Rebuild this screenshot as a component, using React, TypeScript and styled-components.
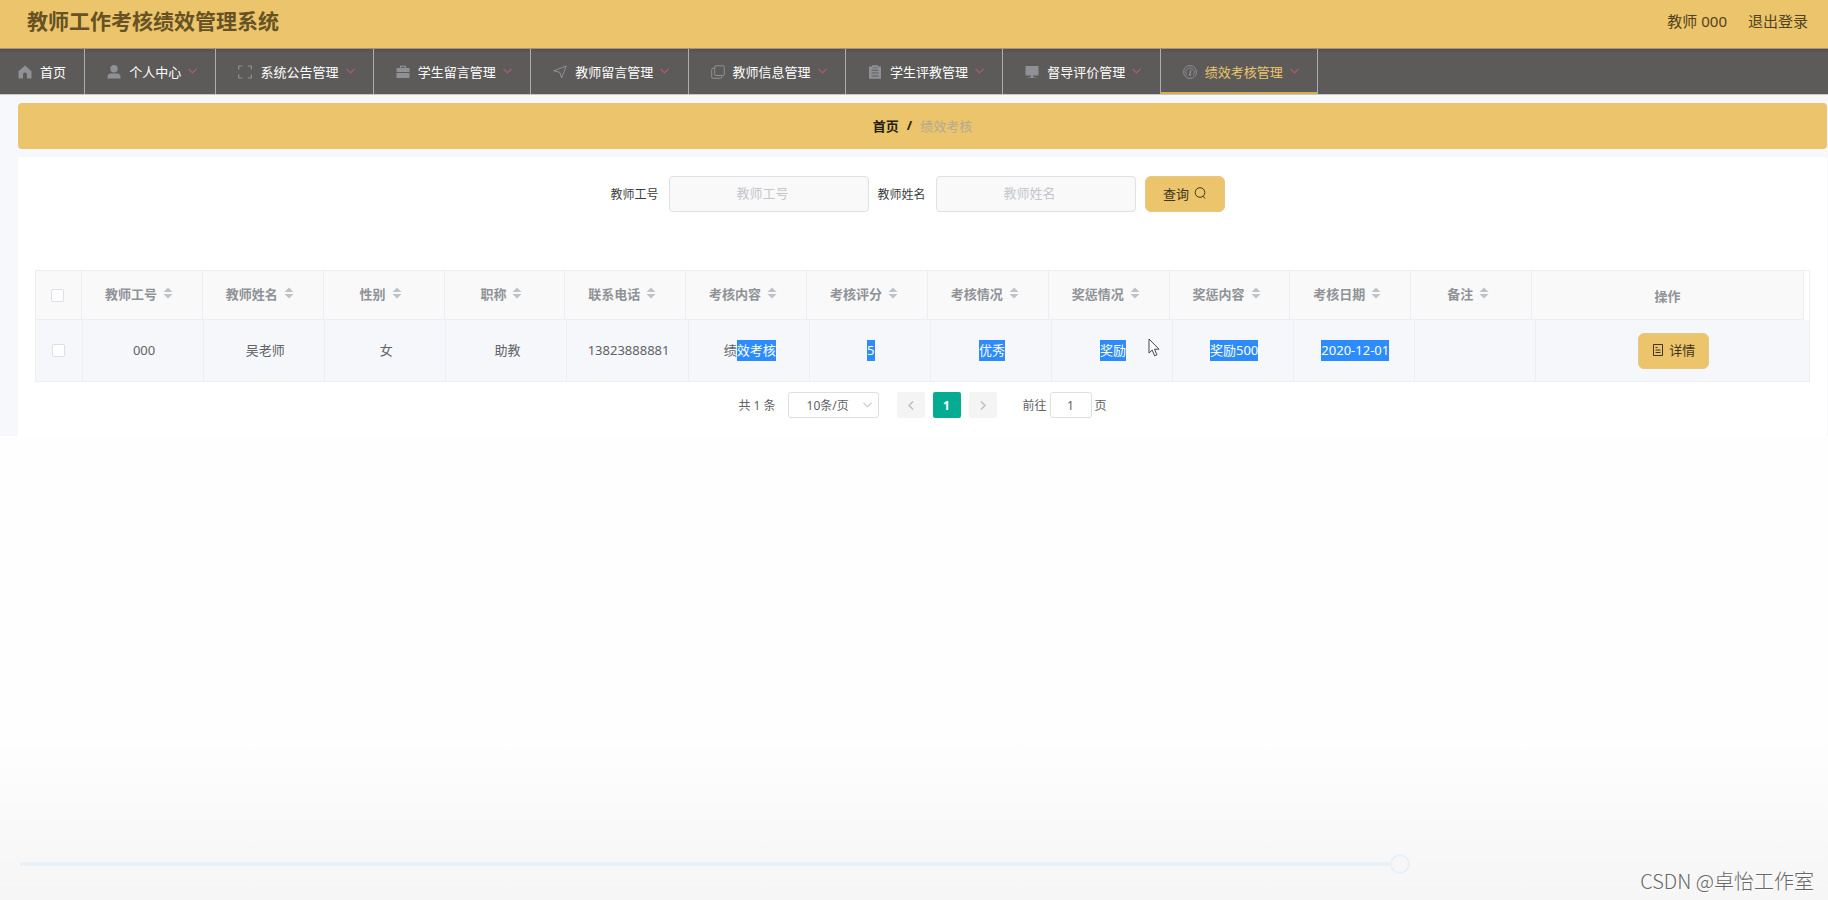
import React from 'react';
import styled, { createGlobalStyle, css } from 'styled-components';

const gold = '#ebc46b';
const line = '#ebeef5';

const GlobalStyle = createGlobalStyle`
  *, *::before, *::after { box-sizing: border-box; }
  body {
    margin: 0;
    background: #fefefe;
    font-family: "Noto Sans", "Noto Sans CJK SC", sans-serif;
    font-size: 13px;
    color: #606266;
  }
  button, input, select { font-family: inherit; font-size: inherit; color: inherit; }
  a { color: inherit; text-decoration: none; }
`;

const Page = styled.div`
  display: flex;
  flex-direction: column;
  min-height: 100vh;
`;

const Header = styled.header`
  display: flex;
  align-items: center;
  justify-content: space-between;
  height: 49px;
  padding: 0 20px 6px 27px;
  background: ${gold};
  border-bottom: 1px solid #a39676;
  color: #4f4220;
`;

const SystemTitle = styled.h1`
  margin: 0;
  font-size: 21px;
  line-height: 28px;
  font-weight: 700;
  color: #665224;
`;

const Account = styled.div`
  display: flex;
  gap: 21px;
  font-size: 15px;
  line-height: 20px;
`;

const Nav = styled.nav`
  background: linear-gradient(#525151, #5d5b59 4px);
  border-bottom: 1px solid #c9c8c8;
`;

const Menu = styled.ul`
  display: grid;
  grid-template-columns: 85fr 131fr repeat(7, 157fr);
  width: 72.1%;
  min-width: max-content;
  margin: 0;
  padding: 0;
  list-style: none;
`;

const MenuLink = styled.a<{ $active?: boolean; $first?: boolean }>`
  display: flex;
  align-items: center;
  height: 45px;
  padding: 0 16px 0 ${p => (p.$first ? 18 : 22)}px;
  border-right: 1px solid #aeadac;
  white-space: nowrap;
  color: ${p => (p.$active ? gold : '#fff')};
  ${p => p.$active && css`box-shadow: inset 0 -2px 0 #d9a94f;`}
`;

const MenuIcon = styled.svg`
  flex: none;
  width: 14px;
  height: 14px;
  margin-right: 8px;
  color: #8f9196;
`;

const MenuArrow = styled.svg`
  flex: none;
  width: 9px;
  height: 6px;
  margin: 0 0 2px 7px;
  color: #b65a80;
`;

const Main = styled.main`
  padding: 8px 1px 0 18px;
  background: #f7f8fb;
`;

const Breadcrumb = styled.nav`
  display: flex;
  align-items: center;
  justify-content: center;
  gap: 8px;
  height: 46px;
  margin-bottom: 8px;
  padding-bottom: 2px;
  border-radius: 4px;
  background: ${gold};
  color: #b3aa93;

  a, b { font-weight: 700; color: #241d0c; }
`;

const Panel = styled.section`
  padding: 19px 17px 18px;
  background: #fff;
`;

const SearchForm = styled.form`
  display: flex;
  align-items: center;
  justify-content: center;
  gap: 9px;
  margin-bottom: 58px;
  padding-right: 10px;
`;

const SearchLabel = styled.label`
  display: flex;
  align-items: center;
  gap: 10px;
  font-size: 12px;
  color: #3c3c3c;
`;

const SearchInput = styled.input`
  width: 200px;
  height: 36px;
  padding: 0 12px 2px 0;
  border: 1px solid #dfe0e3;
  border-radius: 4px;
  background: #f9f9f9;
  font-size: 13px;
  text-align: center;

  &::placeholder { color: #c3c6cc; }
`;

const GoldButton = styled.button<{ $width: number }>`
  display: inline-flex;
  align-items: center;
  justify-content: center;
  gap: 5px;
  width: ${p => p.$width}px;
  height: 36px;
  padding: 0 0 2px;
  border: 1px solid #e3c886;
  border-radius: 6px;
  background: ${gold};
  color: #3f351b;
`;

const ButtonIcon = styled.svg`
  width: 12px;
  height: 12px;
`;

const Table = styled.table`
  display: block;
  border: 1px solid ${line};
  border-bottom: 0;
`;

const HeadRow = styled.tr`
  display: grid;
  grid-template-columns: 46px repeat(12, 4fr) 9fr;
  height: 49px;
  margin-right: 5px;
  background: #f9f9f9;
`;

const BodyRow = styled.tr`
  display: grid;
  grid-template-columns: 47px repeat(12, 4fr) 9fr;
  height: 62px;
  background: #f5f7fa;
`;

const Section = styled.thead`
  display: block;
`;

const HeadCell = styled.th<{ $sortable?: boolean }>`
  display: flex;
  align-items: center;
  justify-content: center;
  padding: 0 0 ${p => (p.$sortable ? 4 : 0)}px;
  border-right: 1px solid ${line};
  border-bottom: 1px solid ${line};
  color: #8f9297;
  font-weight: 700;
`;

const BodyCell = styled.td`
  position: relative;
  display: flex;
  align-items: center;
  justify-content: center;
  padding: 0 0 0 2px;
  border-right: 1px solid ${line};
  border-bottom: 1px solid ${line};
  line-height: 21px;

  &:first-child { padding: 0; }
  &:last-child { border-right: 0; }
`;

const SortButton = styled.button`
  display: flex;
  width: 22px;
  padding: 0 0 0 6px;
  border: 0;
  background: none;
  color: #bfc2c8;

  svg { width: 10px; height: 12px; }
`;

const Checkbox = styled.input`
  appearance: none;
  width: 13px;
  height: 13px;
  margin: 0 2px 0 0;
  border: 1px solid #dcdfe6;
  border-radius: 2px;
  background: #fff;
`;

const Selected = styled.mark`
  display: inline-block;
  background: #2b8bff;
  color: #fff;
`;

const Pointer = styled.svg`
  position: absolute;
  top: 18px;
  right: 12px;
  width: 12px;
  height: 19px;
`;

const Pagination = styled.div`
  display: flex;
  align-items: center;
  justify-content: center;
  margin-top: 10px;
  font-size: 12px;
`;

const SizePicker = styled.div`
  display: grid;
  align-items: center;
  margin: 0 18px 0 12px;

  > * { grid-area: 1 / 1; }
  svg { justify-self: end; width: 9px; height: 6px; margin-right: 7px; color: #c0c4cc; pointer-events: none; }
`;

const SizeSelect = styled.select`
  appearance: none;
  width: 91px;
  height: 26px;
  padding: 0 0 0 18px;
  border: 1px solid #dcdfe6;
  border-radius: 3px;
  background: #fff;
`;

const PageButton = styled.button<{ $current?: boolean }>`
  display: flex;
  align-items: center;
  justify-content: center;
  width: 28px;
  height: 26px;
  margin-right: 8px;
  padding: 0;
  border: 0;
  border-radius: 2px;
  background: ${p => (p.$current ? '#05ac92' : '#f4f4f5')};
  color: ${p => (p.$current ? '#fff' : '#b7bac1')};
  font-weight: 700;

  svg { width: 6px; height: 9px; }
`;

const Jump = styled.label`
  display: flex;
  align-items: center;
  gap: 3px;
  margin-left: 18px;
`;

const JumpInput = styled.input`
  width: 42px;
  height: 26px;
  padding: 0;
  border: 1px solid #dcdfe6;
  border-radius: 3px;
  background: #fff;
  text-align: center;
`;

const Footer = styled.footer`
  position: relative;
  height: 160px;
  margin-top: auto;
  padding: 114px 20px 0;
  background: linear-gradient(#fefefe, #f7f7f7 80%, #f6f6f6);
`;

const Progress = styled.input`
  display: block;
  appearance: none;
  width: 100%;
  height: 20px;
  margin: 0;
  background: linear-gradient(#eaf1f6, #eaf1f6) left center / 77% 4px no-repeat;

  &::-webkit-slider-thumb {
    appearance: none;
    width: 20px;
    height: 20px;
    border: 2px solid #e9f1f7;
    border-radius: 50%;
    background: #f7f7f7;
  }
`;

const Watermark = styled.div`
  position: absolute;
  right: 14px;
  bottom: 5px;
  font-family: "Noto Sans CJK SC", sans-serif;
  font-size: 20px;
  font-weight: 300;
  line-height: 28px;
  color: #666;
  text-shadow: 1px 1px 0 #fff;
`;

const Chevron = () => <path d="M.5 .8 4.500 4.800 8.500 .8" fill="none" stroke="currentColor" strokeWidth="1.100" />;

const icons: Record<string, React.ReactNode> = {
  home: <path d="M7 0.500 0.500 6.200V13.500H5V9.500a2 2 0 0 1 4 0v4h4.500V6.200z" fill="currentColor" />,
  user: <path d="M7 0a3.700 3.700 0 1 1 0 7.400A3.700 3.700 0 0 1 7 0zM.5 13.500v-1.800c0-2 1.500-3.200 3.300-3.200h6.400c1.800 0 3.300 1.200 3.300 3.200v1.800z" fill="currentColor" />,
  frame: <path d="M.7 4.500V1h3.500M9.800 1h3.500v3.500M13.300 9.500V13H9.800M4.200 13H.7V9.500" fill="none" stroke="currentColor" strokeWidth="1.200" />,
  suitcase: <path d="M4 3V.8h6V3h3.500v4H.5V3zm1.200 0h3.600V2H5.200zM.5 8h13v5H.5z" fill="currentColor" fillRule="evenodd" />,
  send: <path d="M.8 5.800 13.200 1 8.600 13 6.800 7.400z" fill="none" stroke="currentColor" strokeLinejoin="round" />,
  copy: <path d="M5 .8h7a1.300 1.300 0 0 1 1.300 1.300v7A1.300 1.300 0 0 1 12 10.500H5A1.300 1.300 0 0 1 3.700 9.200V2.100A1.300 1.300 0 0 1 5 .8zM3.700 3.300H2A1.300 1.300 0 0 0 .7 4.600V12A1.300 1.300 0 0 0 2 13.300h7.500A1.300 1.300 0 0 0 10.800 12v-1.500" fill="none" stroke="currentColor" />,
  order: <path d="M1 1.500h3V.3h6v1.200h3v12.200H1zM3.500 4.800v1h7v-1zm0 2.800v1h7v-1zm0 2.800v1h7v-1zM4.500 2.500v.7h5v-.7z" fill="currentColor" fillRule="evenodd" />,
  monitor: <path d="M.5 1h13v9.500H8v1.700h2.500v.9h-7v-.9H6v-1.700H.5z" fill="currentColor" />,
  gauge: (
    <g fill="none" stroke="currentColor">
      <circle cx="7" cy="7" r="6.400" />
      <path d="M3.700 10A4.300 4.300 0 1 1 10.300 10" strokeWidth=".8" />
      <path d="M7.800 4.800 7 9" strokeWidth="1.300" />
      <circle cx="6.900" cy="9.800" r=".9" fill="currentColor" strokeWidth=".5" />
    </g>
  ),
};

const menu = [
  { label: '首页', icon: 'home' },
  { label: '个人中心', icon: 'user' },
  { label: '系统公告管理', icon: 'frame' },
  { label: '学生留言管理', icon: 'suitcase' },
  { label: '教师留言管理', icon: 'send' },
  { label: '教师信息管理', icon: 'copy' },
  { label: '学生评教管理', icon: 'order' },
  { label: '督导评价管理', icon: 'monitor' },
  { label: '绩效考核管理', icon: 'gauge' },
];

const columns: { title: string; value: React.ReactNode; pointer?: boolean }[] = [
  { title: '教师工号', value: '000' },
  { title: '教师姓名', value: '吴老师' },
  { title: '性别', value: '女' },
  { title: '职称', value: '助教' },
  { title: '联系电话', value: '13823888881' },
  { title: '考核内容', value: <span>绩<Selected>效考核</Selected></span> },
  { title: '考核评分', value: <Selected>5</Selected> },
  { title: '考核情况', value: <Selected>优秀</Selected> },
  { title: '奖惩情况', value: <Selected>奖励</Selected>, pointer: true },
  { title: '奖惩内容', value: <Selected>奖励500</Selected> },
  { title: '考核日期', value: <Selected>2020-12-01</Selected> },
  { title: '备注', value: '' },
];

function SearchField({ id, label }: { id: string; label: string }) {
  return (
    <SearchLabel htmlFor={id}>
      {label}
      <SearchInput id={id} type="text" placeholder={label} />
    </SearchLabel>
  );
}

export default function App() {
  return (
    <>
      <GlobalStyle />
      <Page>
        <Header>
          <SystemTitle>教师工作考核绩效管理系统</SystemTitle>
          <Account>
            <span>教师 000</span>
            <a href="#logout">退出登录</a>
          </Account>
        </Header>
        <Nav>
          <Menu>
            {menu.map((item, i) => (
              <li key={item.label}>
                <MenuLink href="#" $first={i === 0} $active={i === menu.length - 1}>
                  <MenuIcon viewBox="0 0 14 14">{icons[item.icon]}</MenuIcon>
                  {item.label}
                  {i > 0 && <MenuArrow viewBox="0 0 9 6"><Chevron /></MenuArrow>}
                </MenuLink>
              </li>
            ))}
          </Menu>
        </Nav>
        <Main>
          <Breadcrumb>
            <a href="#">首页</a>
            <b>/</b>
            <span>绩效考核</span>
          </Breadcrumb>
          <Panel>
            <SearchForm onSubmit={e => e.preventDefault()}>
              <SearchField id="teacher-no" label="教师工号" />
              <SearchField id="teacher-name" label="教师姓名" />
              <GoldButton type="submit" $width={80}>
                查询
                <ButtonIcon viewBox="0 0 12 12" fill="none" stroke="currentColor">
                  <circle cx="6" cy="5.500" r="4.800" />
                  <path d="m9 9.200 2 2.300" />
                </ButtonIcon>
              </GoldButton>
            </SearchForm>
            <Table>
              <Section>
                <HeadRow>
                  <HeadCell><Checkbox type="checkbox" aria-label="全选" /></HeadCell>
                  {columns.map(c => (
                    <HeadCell key={c.title} $sortable>
                      {c.title}
                      <SortButton type="button" aria-label="排序">
                        <svg viewBox="0 0 10 12"><path d="M5 .5 9.500 5H.5zM5 11.500 .5 7h9z" fill="currentColor" /></svg>
                      </SortButton>
                    </HeadCell>
                  ))}
                  <HeadCell>操作</HeadCell>
                </HeadRow>
              </Section>
              <Section as="tbody">
                <BodyRow>
                  <BodyCell><Checkbox type="checkbox" aria-label="选择 000" /></BodyCell>
                  {columns.map(c => (
                    <BodyCell key={c.title}>
                      {c.value}
                      {c.pointer && (
                        <Pointer viewBox="0 0 12 19">
                          <path d="M1 1v14l3.200-3 2.400 5.800 2.300-1-2.400-5.600H11z" fill="#fff" stroke="#444" />
                        </Pointer>
                      )}
                    </BodyCell>
                  ))}
                  <BodyCell>
                    <GoldButton type="button" $width={71}>
                      <ButtonIcon viewBox="0 0 12 12" fill="none" stroke="currentColor">
                        <path d="M1.500 .5h9v11h-9zM3.500 3.500h2M3.500 6h5M3.500 8.500h5" />
                      </ButtonIcon>
                      详情
                    </GoldButton>
                  </BodyCell>
                </BodyRow>
              </Section>
            </Table>
            <Pagination>
              <span>共 1 条</span>
              <SizePicker>
                <SizeSelect aria-label="每页条数"><option>10条/页</option></SizeSelect>
                <svg viewBox="0 0 9 6"><Chevron /></svg>
              </SizePicker>
              <PageButton type="button" aria-label="上一页">
                <svg viewBox="0 0 6 9"><path d="M5 .5 1 4.500l4 4" fill="none" stroke="currentColor" strokeWidth="1.300" /></svg>
              </PageButton>
              <PageButton type="button" $current>1</PageButton>
              <PageButton type="button" aria-label="下一页">
                <svg viewBox="0 0 6 9"><path d="m1 .5 4 4-4 4" fill="none" stroke="currentColor" strokeWidth="1.300" /></svg>
              </PageButton>
              <Jump>
                前往
                <JumpInput type="text" defaultValue="1" />
                页
              </Jump>
            </Pagination>
          </Panel>
        </Main>
        <Footer>
          <Progress type="range" aria-label="播放进度" min={0} max={1000} defaultValue={775} />
          <Watermark>CSDN @卓怡工作室</Watermark>
        </Footer>
      </Page>
    </>
  );
}
